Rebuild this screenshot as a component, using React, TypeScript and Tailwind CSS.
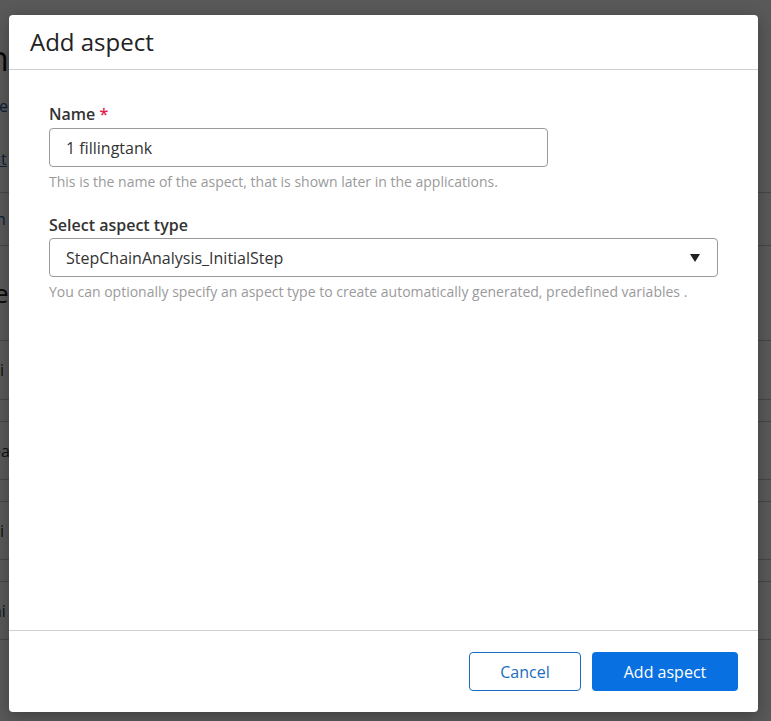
export default function App() {
  return (
    <div className="relative w-[771px] h-[721px] overflow-hidden bg-white font-['Open_Sans',sans-serif]">
      {/* background page */}
      <div className="absolute inset-0 flex flex-col">
        <div className="h-[38px]" />
        <div className="h-[40px] text-[34px] leading-[40px] text-[#1a1a1a] ml-[-12px]">n</div>
        <div className="h-[18px]" />
        <div className="h-[20px] text-[16px] leading-[20px] text-[#2060a0] ml-[-1px]">e</div>
        <div className="h-[32px]" />
        <div className="h-[22px] text-[16px] leading-[22px] text-[#2060a0] underline ml-[-3px]">it</div>
        <div className="h-[22px]" />
        <div className="h-[53px] border-t border-[#c8c8c8] flex items-center text-[16px] text-[#2060a0] ml-[-4px]">n</div>
        <div className="h-[95px] border-t border-[#c8c8c8] flex items-center text-[26px] text-[#1a1a1a] ml-[-6px]">e</div>
        <div className="h-[59px] border-t border-[#c8c8c8] flex items-center text-[16px] text-[#333] ml-[-4px]">li</div>
        <div className="h-[22px] border-t border-[#c8c8c8]" />
        <div className="h-[58px] border-t border-[#c8c8c8] flex items-center text-[16px] text-[#333] ml-[-8px]">ea</div>
        <div className="h-[22px] border-t border-[#c8c8c8]" />
        <div className="h-[58px] border-t border-[#c8c8c8] flex items-center text-[16px] text-[#333] ml-[-4px]">li</div>
        <div className="h-[22px] border-t border-[#c8c8c8]" />
        <div className="h-[58px] border-t border-[#c8c8c8] flex items-center text-[16px] text-[#333] ml-[-8px]">ni</div>
        <div className="h-[22px] border-t border-[#c8c8c8]" />
      </div>
      {/* overlay */}
      <div className="absolute inset-0 bg-black/[0.65]" />
      {/* modal */}
      <div className="absolute left-[9px] top-[15px] w-[749px] h-[697px] bg-white rounded-[4px] flex flex-col shadow-[0_4px_16px_rgba(0,0,0,0.3)]">
        <div className="h-[55px] shrink-0 border-b border-[#cfcfcf] px-[21px] flex items-center">
          <span className="text-[24px] leading-[32px] text-[#222]">Add aspect</span>
        </div>
        <div className="flex-1 px-[40px] pt-[32px] flex flex-col">
          <label className="text-[16px] leading-[24px] font-semibold text-[#333]">
            Name <span className="text-[#e0204d]">*</span>
          </label>
          <div className="mt-[2px] w-[499px] h-[39px] border border-[#9a9a9a] rounded-[4px] flex items-center px-[16px] text-[16px] text-[#333]">
            1 fillingtank
          </div>
          <div className="mt-[6px] text-[14px] leading-[18px] text-[#9a9a9a]">
            This is the name of the aspect, that is shown later in the applications.
          </div>
          <label className="mt-[22px] text-[16px] leading-[24px] font-semibold text-[#333]">Select aspect type</label>
          <div className="mt-[1px] w-[669px] h-[39px] border border-[#9a9a9a] rounded-[4px] flex items-center justify-between pl-[16px] pr-[17px] text-[16px] text-[#333]">
            <span>StepChainAnalysis_InitialStep</span>
            <svg width="10" height="8" viewBox="0 0 10 8">
              <path d="M0 0 H10 L5 8 Z" fill="#222" />
            </svg>
          </div>
          <div className="mt-[6px] text-[14px] leading-[18px] text-[#9a9a9a]">
            You can optionally specify an aspect type to create automatically generated, predefined variables .
          </div>
        </div>
        <div className="h-[82px] shrink-0 border-t border-[#cfcfcf] flex items-center justify-end gap-[11px] pr-[20px]">
          <button className="w-[112px] h-[39px] border border-[#1b6cc0] rounded-[4px] text-[16px] text-[#1b6cc0] bg-white">
            Cancel
          </button>
          <button className="w-[146px] h-[39px] rounded-[4px] text-[16px] text-white bg-[#0870e0]">
            Add aspect
          </button>
        </div>
      </div>
    </div>
  );
}
